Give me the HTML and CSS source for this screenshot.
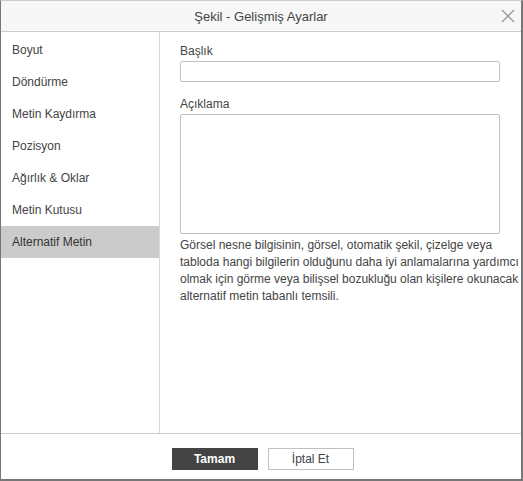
FILE: index.html
```html
<!DOCTYPE html>
<html>
<head>
<meta charset="utf-8">
<link rel="stylesheet" href="styles.css">
</head>
<body>
<div class="dialog">
  <div class="header">
    <span class="title">Şekil - Gelişmiş Ayarlar</span>
    <svg class="close" width="14" height="14" viewBox="0 0 14 14"><path d="M1 1L13 13M13 1L1 13" stroke="#999" stroke-width="1.3" fill="none"/></svg>
  </div>
  <div class="body">
    <div class="sidebar">
      <div class="item">Boyut</div>
      <div class="item">Döndürme</div>
      <div class="item">Metin Kaydırma</div>
      <div class="item">Pozisyon</div>
      <div class="item">Ağırlık &amp; Oklar</div>
      <div class="item">Metin Kutusu</div>
      <div class="item active">Alternatif Metin</div>
    </div>
    <div class="content">
      <div class="label">Başlık</div>
      <div class="input"></div>
      <div class="label second">Açıklama</div>
      <div class="textarea"></div>
      <p class="desc">Görsel nesne bilgisinin, görsel, otomatik şekil, çizelge veya<br>tabloda hangi bilgilerin olduğunu daha iyi anlamalarına yardımcı<br>olmak için görme veya bilişsel bozukluğu olan kişilere okunacak<br>alternatif metin tabanlı temsili.</p>
    </div>
  </div>
  <div class="footer">
    <button class="btn primary">Tamam</button>
    <button class="btn">İptal Et</button>
  </div>
</div>
</body>
</html>
```
FILE: styles.css
```css
html, body { margin: 0; padding: 0; background: #fff; }
body { font-family: "Liberation Sans", Arial, sans-serif; color: #444; }
.dialog {
  width: 523px; height: 481px; box-sizing: border-box;
  border-left: 1px solid #777; border-right: 2px solid #777; border-bottom: 2px solid #777;
  border-top: 1px solid #ccc;
  display: flex; flex-direction: column; background: #fff;
}
.header {
  height: 30px; flex: none; background: #f7f7f7; border-bottom: 1px solid #cbcbcb;
  display: flex; align-items: center; justify-content: center; position: relative;
}
.title { font-size: 13px; color: #444; }
.close { position: absolute; right: 6px; top: 8px; }
.body { flex: 1; display: flex; min-height: 0; }
.sidebar { width: 158px; flex: none; border-right: 1px solid #d8d8d8; padding-top: 2px; }
.item { height: 32px; line-height: 32px; padding-left: 11px; font-size: 12px; color: #444; }
.item.active { background: #cbcbcb; color: #333; }
.content { flex: 1; padding: 10px 20px 0 20px; }
.label { font-size: 12px; height: 19px; line-height: 19px; }
.label.second { margin-top: 13px; }
.input { height: 19px; border: 1px solid #c0c0c0; border-radius: 2px; width: 318px; }
.textarea { height: 118px; border: 1px solid #c0c0c0; border-radius: 2px; width: 318px; }
.desc { margin: 3px 0 0 0; font-size: 12px; line-height: 17px; white-space: nowrap; color: #444; }
.footer {
  height: 46px; flex: none; border-top: 1px solid #cbcbcb;
  display: flex; justify-content: center; align-items: flex-start; gap: 10px; padding-top: 14px; box-sizing: border-box;
  padding-left: 3px;
}
.btn {
  width: 86px; height: 22px; box-sizing: border-box; border: 1px solid #c0c0c0; background: #fff;
  font-family: "Liberation Sans", Arial, sans-serif; font-size: 12px; color: #444; padding: 0; border-radius: 0;
}
.btn.primary { background: #444; border-color: #444; color: #fff; font-weight: bold; }
```
